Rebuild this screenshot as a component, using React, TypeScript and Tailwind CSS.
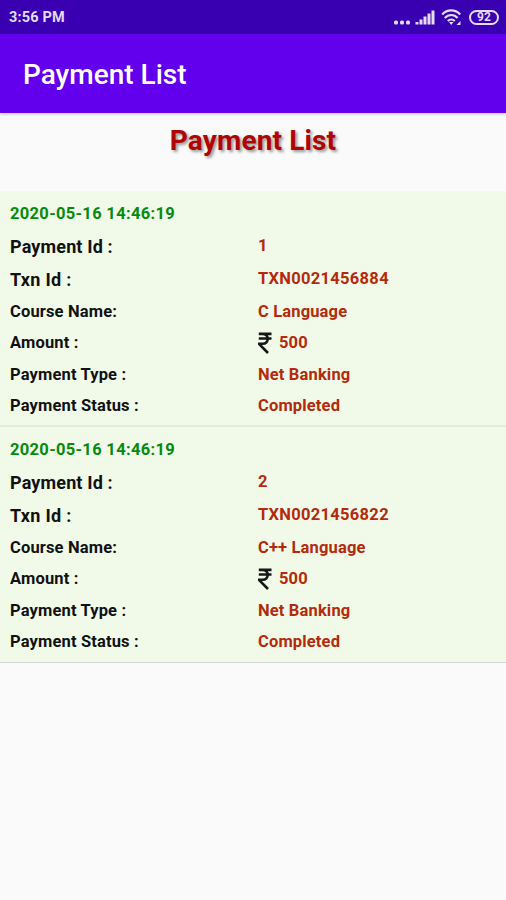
type Payment = {
  id: string;
  date: string;
  txnId: string;
  course: string;
  amount: string;
  type: string;
  status: string;
};

const payments: Payment[] = [
  {
    id: "1",
    date: "2020-05-16 14:46:19",
    txnId: "TXN0021456884",
    course: "C Language",
    amount: "500",
    type: "Net Banking",
    status: "Completed",
  },
  {
    id: "2",
    date: "2020-05-16 14:46:19",
    txnId: "TXN0021456822",
    course: "C++ Language",
    amount: "500",
    type: "Net Banking",
    status: "Completed",
  },
];

function StatusBar() {
  return (
    <div className="flex h-[34px] items-center justify-between bg-[#3900b1] pl-[9px] pr-[7px] text-[#e4dcf5]">
      <span className="pt-[2px] text-[14.5px] font-bold tracking-[0.15px]">3:56 PM</span>
      <div className="flex items-center">
        <svg width="48" height="20" viewBox="0 0 48 20" fill="currentColor">
          <rect x="1" y="13.500" width="4" height="4" rx="1.500" />
          <rect x="7" y="13.500" width="4" height="4" rx="1.500" />
          <rect x="13" y="13.500" width="4" height="4" rx="1.500" />
          <rect x="22.500" y="15" width="3" height="2.500" />
          <rect x="26.500" y="12.500" width="3" height="5" />
          <rect x="30.500" y="9.500" width="3" height="8" />
          <rect x="34.500" y="6.500" width="3" height="11" />
          <rect x="38.500" y="3.500" width="3" height="14" />
        </svg>
        <svg width="22" height="20" viewBox="0 0 22 20" fill="none" stroke="currentColor" strokeWidth="2.200">
          <path d="M1.200 7.500 C6.200 2 14.200 2 19.200 7.500" />
          <path d="M3.800 11 C7.300 7 13.300 7 16.600 11" />
          <path d="M6.800 14 C8.800 12 11.800 12 13.800 14" />
          <path d="M8 15 H12.500 L10.200 18 Z M19.500 14 V18 H15.500 Z" fill="currentColor" stroke="none" />
        </svg>
        <span className="ml-1.5 flex h-[15px] w-[30px] items-center justify-center rounded-full border-2 border-current text-[12px] leading-none font-bold">
          92
        </span>
      </div>
    </div>
  );
}

function Rupee() {
  return (
    <svg className="mr-[7px] -mt-[2px] shrink-0" width="14" height="22" viewBox="0 0 14 22" fill="none" stroke="#161616" strokeWidth="2.600">
      <path d="M0.800 1.900 H13.500 M0.800 6.500 H13.500 M0.800 1.900 H4.500 C11.500 1.900 11.500 11.800 4.500 11.800 H1 L10 21" />
    </svg>
  );
}

function Row({ label, value, className, rupee }: { label: string; value: string; className: string; rupee?: boolean }) {
  return (
    <div className={`flex items-center ${className}`}>
      <span className="w-[248px] text-[#111]">{label}</span>
      <span className="flex items-center text-[16.500px] text-[#b52a0c]">
        {rupee && <Rupee />}
        {value}
      </span>
    </div>
  );
}

function PaymentCard({ payment }: { payment: Payment }) {
  return (
    <div className="h-[236px] border-b-2 border-[#e5e9df] bg-[#f1fae9] pl-[10px] pt-[7px] font-bold tracking-[0.15px] last:border-b last:border-[#d4d6d2]">
      <div className="flex h-[32px] items-center text-[16.500px] tracking-[0.32px] text-[#078a0c]">{payment.date}</div>
      <Row label="Payment Id :" value={payment.id} className="h-[33px] text-[18px]" />
      <Row label="Txn Id :" value={payment.txnId} className="h-[33px] text-[18px] tracking-[0.3px]" />
      <Row label="Course Name:" value={payment.course} className="h-[32px] text-[16.500px]" />
      <Row label="Amount :" value={payment.amount} className="h-[31px] text-[16.500px]" rupee />
      <Row label="Payment Type :" value={payment.type} className="h-[32px] text-[16.500px]" />
      <Row label="Payment Status :" value={payment.status} className="h-[31px] text-[16.500px]" />
    </div>
  );
}

export default function App() {
  return (
    <div className="h-[900px] w-[506px] overflow-hidden bg-[#fafafa] font-['Roboto',sans-serif]">
      <StatusBar />
      <header className="flex h-[79px] items-center bg-[#6200ee] pl-[23px] pt-[2px] text-[28px] font-medium text-white shadow-[0_1px_3px_rgba(0,0,0,0.25)]">
        Payment List
      </header>
      <h1 className="flex h-[78px] justify-center pt-[7px] text-[28px] font-bold tracking-[0.15px] text-[#b00505] [text-shadow:2px_2px_3px_rgba(0,0,0,0.4)]">
        Payment List
      </h1>
      <main>
        {payments.map((payment) => (
          <PaymentCard key={payment.id} payment={payment} />
        ))}
      </main>
    </div>
  );
}
